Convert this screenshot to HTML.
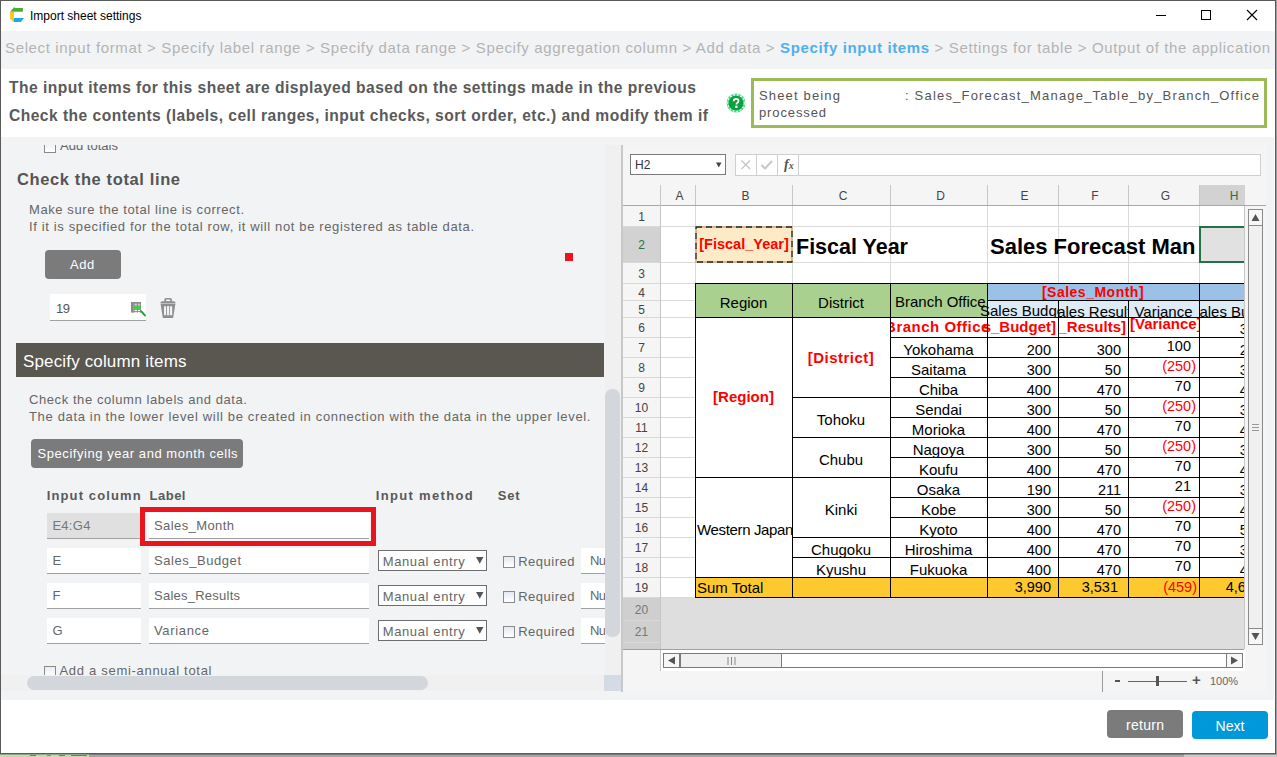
<!DOCTYPE html><html><head><meta charset="utf-8"><style>
html,body{margin:0;padding:0;width:1277px;height:757px;overflow:hidden;background:#fff;}
body{position:relative;font-family:"Liberation Sans", sans-serif;}
div{box-sizing:border-box;}
</style></head><body>
<div style="position:absolute;left:1276px;top:0px;width:1px;height:757px;background:#a0a0a0;"></div>
<div style="position:absolute;left:0px;top:754px;width:1277px;height:3px;background:#a4a4a4;"></div>
<div style="position:absolute;left:1184px;top:754px;width:93px;height:3px;background:#cbcbcb;"></div>
<div style="position:absolute;left:0px;top:754px;width:89px;height:3px;background:#c3dcae;"></div>
<div style="position:absolute;left:30px;top:755px;width:6px;height:1px;background:#777;"></div>
<div style="position:absolute;left:47px;top:755px;width:4px;height:1px;background:#888;"></div>
<div style="position:absolute;left:59px;top:755px;width:6px;height:1px;background:#777;"></div>
<div style="position:absolute;left:71px;top:755px;width:16px;height:1px;background:#777;"></div>
<div style="position:absolute;left:0px;top:754px;width:1277px;height:1px;background:rgba(0,0,0,0.25);"></div>
<div style="position:absolute;left:0px;top:0px;width:1276px;height:754px;border:1px solid #5a5a5a;background:#fff;"></div>
<svg style="position:absolute;left:0px;top:0px" width="28" height="26" viewBox="0 0 28 26">
<polygon points="10.1,11.7 14.4,6.9 14.8,8.1 22.9,8.1 22.9,11.7" fill="#46ad3a"/>
<polygon points="10.1,11.7 14,11.7 14,21.9 13.3,21.9 10.1,18.5" fill="#f8c81c"/>
<polygon points="14,18 24,18 20.8,21.9 14,21.9" fill="#16a9ec"/>
</svg>
<div style="position:absolute;left:30px;top:8px;white-space:nowrap;font-size:12px;color:#000;line-height:16px;">Import sheet settings</div>
<div style="position:absolute;left:1156px;top:15px;width:10px;height:1px;background:#000;"></div>
<div style="position:absolute;left:1201px;top:10px;width:10px;height:10px;border:1px solid #000;"></div>
<svg style="position:absolute;left:1246px;top:9px" width="12" height="12" viewBox="0 0 12 12"><path d="M1 1 L11 11 M11 1 L1 11" stroke="#000" stroke-width="1.1"/></svg>
<div style="position:absolute;left:1px;top:31px;width:1274px;height:38px;background:#f2f3f5;"></div>
<div style="position:absolute;left:5px;top:39px;white-space:nowrap;font-size:15px;color:#b4b4b4;line-height:18px;;letter-spacing:0.643px">Select input format &gt; Specify label range &gt; Specify data range &gt; Specify aggregation column &gt; Add data &gt; <b style="color:#50b0ee">Specify input items</b> &gt; Settings for table &gt; Output of the application</div>
<div style="position:absolute;left:9px;top:79px;white-space:nowrap;font-size:15.6px;font-weight:bold;color:#5a5a5a;line-height:18px;;letter-spacing:0.472px">The input items for this sheet are displayed based on the settings made in the previous</div>
<div style="position:absolute;left:9px;top:107px;white-space:nowrap;font-size:15.6px;font-weight:bold;color:#5a5a5a;line-height:18px;;letter-spacing:0.468px">Check the contents (labels, cell ranges, input checks, sort order, etc.) and modify them if</div>
<svg style="position:absolute;left:726px;top:93px" width="20" height="20" viewBox="0 0 20 20">
<circle cx="10" cy="10" r="9.4" fill="#3fd483"/>
<circle cx="10" cy="10" r="8.3" fill="none" stroke="#e6fbe6" stroke-width="1.3" stroke-dasharray="2 1.6"/>
<circle cx="10" cy="10" r="7.3" fill="#08a23c"/>
<path d="M7.7 8.2 Q7.7 5.8 10.1 5.8 Q12.5 5.8 12.5 8 Q12.5 9.3 11.1 10 Q10.4 10.4 10.4 11.6" fill="none" stroke="#fff" stroke-width="1.8"/>
<rect x="9.2" y="12.7" width="2.3" height="2.2" fill="#fff"/>
</svg>
<div style="position:absolute;left:751px;top:78px;width:516px;height:50px;border:3px solid #9bbb59;background:#fff;"></div>
<div style="position:absolute;left:759px;top:88px;white-space:nowrap;font-size:13px;color:#555;line-height:16.5px;;letter-spacing:1.159px">Sheet being</div>
<div style="position:absolute;left:759px;top:104.5px;white-space:nowrap;font-size:13px;color:#555;line-height:16.5px;;letter-spacing:0.877px">processed</div>
<div style="position:absolute;left:905px;top:88px;white-space:nowrap;font-size:13px;color:#555;line-height:16.5px;;letter-spacing:1.191px">: Sales_Forecast_Manage_Table_by_Branch_Office</div>
<div style="position:absolute;left:1px;top:137px;width:1273px;height:563px;background:#f2f3f5;"></div>
<div style="position:absolute;left:1px;top:145px;width:604px;height:530px;overflow:hidden;">
<div style="position:absolute;left:43px;top:-4px;width:12px;height:12px;border:1px solid #8a8a8a;background:linear-gradient(#e9eef5,#fff);"></div>
<div style="position:absolute;left:59px;top:-6px;white-space:nowrap;font-size:13px;line-height:14px;color:#666;;letter-spacing:0.019px">Add totals</div>
<div style="position:absolute;left:16px;top:25px;white-space:nowrap;font-size:16.5px;font-weight:bold;color:#555;line-height:18px;;letter-spacing:0.617px">Check the total line</div>
<div style="position:absolute;left:28px;top:58px;white-space:nowrap;font-size:13px;line-height:14px;color:#666;;letter-spacing:0.590px">Make sure the total line is correct.</div>
<div style="position:absolute;left:28px;top:75px;white-space:nowrap;font-size:13px;line-height:14px;color:#666;;letter-spacing:0.637px">If it is specified for the total row, it will not be registered as table data.</div>
<div style="position:absolute;left:44px;top:105px;width:76px;height:29px;background:#7b7b7b;border-radius:4px;"></div>
<div style="position:absolute;left:69px;top:113px;white-space:nowrap;font-size:13px;color:#fff;line-height:14px;;letter-spacing:0.580px">Add</div>
<div style="position:absolute;left:564px;top:108px;width:8px;height:8px;background:#e8141e;"></div>
<div style="position:absolute;left:49px;top:149px;width:96px;height:27px;background:#fff;border-bottom:1.5px solid #a0a0a0;"></div>
<div style="position:absolute;left:55px;top:157px;white-space:nowrap;font-size:13px;line-height:14px;color:#555;;letter-spacing:-0.469px">19</div>
<svg style="position:absolute;left:130px;top:157px" width="16" height="16" viewBox="0 0 16 16">
<rect x="0" y="0" width="10" height="10.6" fill="#fff"/>
<rect x="0" y="0" width="10" height="1.8" fill="#8c8c8c"/>
<rect x="0" y="0" width="2.6" height="10.6" fill="#8c8c8c"/>
<path d="M0 3.1H10M0 5.2H10M0 7.3H10M0 9.6H10M3.1 0V10.6M6.4 0V10.6M9.5 0V10.6" stroke="#8c8c8c" stroke-width="1"/>
<rect x="3" y="3.6" width="7" height="4.4" fill="#3cc63c" opacity="0.8"/>
<path d="M10.3 9.4 L13.9 13.4" stroke="#17a534" stroke-width="2" stroke-linecap="round"/></svg>
<svg style="position:absolute;left:159px;top:152px" width="16" height="22" viewBox="0 0 16 22">
<path d="M4.2 4.5 V3 Q4.2 1 6.2 1 H10 Q12 1 12 3 V4.5 Z M6 4 H10.2 V3.2 Q10.2 2.5 9.5 2.5 H6.7 Q6 2.5 6 3.2 Z" fill="#8e8e8e" fill-rule="evenodd"/>
<polygon points="0.2,6 1.6,4.3 14.4,4.3 15.8,6" fill="#8e8e8e"/>
<polygon points="0.5,6.6 15.5,6.6 13.1,20.9 2.8,20.9" fill="#8e8e8e"/>
<g fill="#f2f3f5"><rect x="4" y="9.3" width="2.1" height="8.9"/><rect x="7" y="9.1" width="2.2" height="9.2"/><rect x="10" y="9.3" width="2.2" height="8.9"/></g>
</svg>
<div style="position:absolute;left:15px;top:198px;width:588px;height:34px;background:#5a5650;"></div>
<div style="position:absolute;left:22px;top:207px;white-space:nowrap;font-size:17px;color:#fff;line-height:20px;;letter-spacing:0.151px">Specify column items</div>
<div style="position:absolute;left:28px;top:248px;white-space:nowrap;font-size:13px;line-height:14px;color:#666;;letter-spacing:0.579px">Check the column labels and data.</div>
<div style="position:absolute;left:28px;top:265px;white-space:nowrap;font-size:13px;line-height:14px;color:#666;;letter-spacing:0.658px">The data in the lower level will be created in connection with the data in the upper level.</div>
<div style="position:absolute;left:30px;top:294px;width:212px;height:29px;background:#7b7b7b;border-radius:4px;"></div>
<div style="position:absolute;left:36.6px;top:301px;white-space:nowrap;font-size:13px;color:#fff;line-height:15px;;letter-spacing:0.548px">Specifying year and month cells</div>
<div style="position:absolute;left:45.7px;top:344px;white-space:nowrap;font-size:13px;font-weight:bold;color:#595959;line-height:14px;;letter-spacing:1.126px">Input column</div>
<div style="position:absolute;left:148.5px;top:344px;white-space:nowrap;font-size:13px;font-weight:bold;color:#595959;line-height:14px;;letter-spacing:0.508px">Label</div>
<div style="position:absolute;left:374.7px;top:344px;white-space:nowrap;font-size:13px;font-weight:bold;color:#595959;line-height:14px;;letter-spacing:1.334px">Input method</div>
<div style="position:absolute;left:496.7px;top:344px;white-space:nowrap;font-size:13px;font-weight:bold;color:#595959;line-height:14px;;letter-spacing:0.883px">Set</div>
<div style="position:absolute;left:46px;top:368px;width:94px;height:26px;background:#e0e0e0;border-bottom:1.5px solid #a0a0a0;"></div>
<div style="position:absolute;left:51.4px;top:374px;white-space:nowrap;font-size:13px;line-height:14px;color:#666;color:#777;;letter-spacing:0.285px">E4:G4</div>
<div style="position:absolute;left:139px;top:362px;width:236px;height:39px;border:5px solid #e8141e;background:#f6f6f6;"></div>
<div style="position:absolute;left:148px;top:367px;width:220px;height:27px;background:#fff;border-bottom:1.5px solid #a0a0a0;"></div>
<div style="position:absolute;left:153px;top:374px;white-space:nowrap;font-size:13px;line-height:14px;color:#666;;letter-spacing:0.411px">Sales_Month</div>
<div style="position:absolute;left:46px;top:403px;width:94px;height:26px;background:#fff;border-bottom:1.5px solid #a0a0a0;"></div>
<div style="position:absolute;left:51.4px;top:409px;white-space:nowrap;font-size:13px;line-height:14px;color:#666;">E</div>
<div style="position:absolute;left:148px;top:403px;width:220px;height:26px;background:#fff;border-bottom:1.5px solid #a0a0a0;"></div>
<div style="position:absolute;left:153px;top:409px;white-space:nowrap;font-size:13px;line-height:14px;color:#666;;letter-spacing:0.550px">Sales_Budget</div>
<div style="position:absolute;left:377px;top:405px;width:109px;height:21px;border:1px solid #6e6e6e;background:#fff;"></div>
<div style="position:absolute;left:381.7px;top:410px;white-space:nowrap;font-size:13px;line-height:14px;color:#666;;letter-spacing:0.622px">Manual entry</div>
<svg style="position:absolute;left:475px;top:412px" width="8" height="7" viewBox="0 0 8 7"><path d="M0 0H7.5L3.75 6.8Z" fill="#555"/></svg>
<div style="position:absolute;left:502px;top:411px;width:12px;height:12px;border:1px solid #8a8a8a;background:linear-gradient(#e3e9f2,#fff);"></div>
<div style="position:absolute;left:517.2px;top:410px;white-space:nowrap;font-size:13px;line-height:14px;color:#666;;letter-spacing:0.519px">Required</div>
<div style="position:absolute;left:580px;top:403px;width:40px;height:26px;background:#fff;border-bottom:1.5px solid #a0a0a0;"></div>
<div style="position:absolute;left:589px;top:409px;white-space:nowrap;font-size:13px;line-height:14px;color:#666;;letter-spacing:-0.625px">Nu</div>
<div style="position:absolute;left:46px;top:438px;width:94px;height:26px;background:#fff;border-bottom:1.5px solid #a0a0a0;"></div>
<div style="position:absolute;left:51.4px;top:444px;white-space:nowrap;font-size:13px;line-height:14px;color:#666;">F</div>
<div style="position:absolute;left:148px;top:438px;width:220px;height:26px;background:#fff;border-bottom:1.5px solid #a0a0a0;"></div>
<div style="position:absolute;left:153px;top:444px;white-space:nowrap;font-size:13px;line-height:14px;color:#666;;letter-spacing:0.241px">Sales_Results</div>
<div style="position:absolute;left:377px;top:440px;width:109px;height:21px;border:1px solid #6e6e6e;background:#fff;"></div>
<div style="position:absolute;left:381.7px;top:445px;white-space:nowrap;font-size:13px;line-height:14px;color:#666;;letter-spacing:0.622px">Manual entry</div>
<svg style="position:absolute;left:475px;top:447px" width="8" height="7" viewBox="0 0 8 7"><path d="M0 0H7.5L3.75 6.8Z" fill="#555"/></svg>
<div style="position:absolute;left:502px;top:446px;width:12px;height:12px;border:1px solid #8a8a8a;background:linear-gradient(#e3e9f2,#fff);"></div>
<div style="position:absolute;left:517.2px;top:445px;white-space:nowrap;font-size:13px;line-height:14px;color:#666;;letter-spacing:0.519px">Required</div>
<div style="position:absolute;left:580px;top:438px;width:40px;height:26px;background:#fff;border-bottom:1.5px solid #a0a0a0;"></div>
<div style="position:absolute;left:589px;top:444px;white-space:nowrap;font-size:13px;line-height:14px;color:#666;;letter-spacing:-0.625px">Nu</div>
<div style="position:absolute;left:46px;top:473px;width:94px;height:26px;background:#fff;border-bottom:1.5px solid #a0a0a0;"></div>
<div style="position:absolute;left:51.4px;top:479px;white-space:nowrap;font-size:13px;line-height:14px;color:#666;">G</div>
<div style="position:absolute;left:148px;top:473px;width:220px;height:26px;background:#fff;border-bottom:1.5px solid #a0a0a0;"></div>
<div style="position:absolute;left:153px;top:479px;white-space:nowrap;font-size:13px;line-height:14px;color:#666;;letter-spacing:0.665px">Variance</div>
<div style="position:absolute;left:377px;top:475px;width:109px;height:21px;border:1px solid #6e6e6e;background:#fff;"></div>
<div style="position:absolute;left:381.7px;top:480px;white-space:nowrap;font-size:13px;line-height:14px;color:#666;;letter-spacing:0.622px">Manual entry</div>
<svg style="position:absolute;left:475px;top:482px" width="8" height="7" viewBox="0 0 8 7"><path d="M0 0H7.5L3.75 6.8Z" fill="#555"/></svg>
<div style="position:absolute;left:502px;top:481px;width:12px;height:12px;border:1px solid #8a8a8a;background:linear-gradient(#e3e9f2,#fff);"></div>
<div style="position:absolute;left:517.2px;top:480px;white-space:nowrap;font-size:13px;line-height:14px;color:#666;;letter-spacing:0.519px">Required</div>
<div style="position:absolute;left:580px;top:473px;width:40px;height:26px;background:#fff;border-bottom:1.5px solid #a0a0a0;"></div>
<div style="position:absolute;left:589px;top:479px;white-space:nowrap;font-size:13px;line-height:14px;color:#666;;letter-spacing:-0.625px">Nu</div>
<div style="position:absolute;left:43px;top:521px;width:12px;height:12px;border:1px solid #8a8a8a;background:linear-gradient(#e9eef5,#fff);"></div>
<div style="position:absolute;left:58.5px;top:519px;white-space:nowrap;font-size:13px;line-height:14px;color:#666;;letter-spacing:0.700px">Add a semi-annual total</div>
</div>
<div style="position:absolute;left:605px;top:145px;width:16px;height:530px;background:#f0f0f0;"></div>
<div style="position:absolute;left:605px;top:389px;width:15px;height:248px;background:#d3d6db;border-radius:7px;"></div>
<div style="position:absolute;left:1px;top:675px;width:604px;height:16px;background:#f0f0f0;"></div>
<div style="position:absolute;left:27px;top:676px;width:401px;height:14px;background:#d3d6db;border-radius:7px;"></div>
<div style="position:absolute;left:604px;top:675px;width:17px;height:16px;background:#d5dbe5;"></div>
<div style="position:absolute;left:621px;top:145px;width:2px;height:547px;background:#c8c8c8;"></div>
<div style="position:absolute;left:623px;top:145px;width:643px;height:547px;background:#f5f5f5;"></div>
<div style="position:absolute;left:630px;top:154px;width:96px;height:21px;border:1px solid #7a7a7a;background:#fff;"></div>
<div style="position:absolute;left:635px;top:158px;white-space:nowrap;font-size:12px;color:#333;line-height:14px;">H2</div>
<svg style="position:absolute;left:716px;top:162px" width="6" height="6" viewBox="0 0 6 6"><path d="M0 0.5H5.5L2.75 5.5Z" fill="#444"/></svg>
<div style="position:absolute;left:735px;top:154px;width:64px;height:22px;border:1px solid #cfcfcf;background:#fff;"></div>
<div style="position:absolute;left:756px;top:155px;width:1px;height:20px;background:#cfcfcf;"></div>
<div style="position:absolute;left:777px;top:155px;width:1px;height:20px;background:#cfcfcf;"></div>
<div style="position:absolute;left:798px;top:154px;width:463px;height:22px;border:1px solid #cfcfcf;background:#fff;"></div>
<svg style="position:absolute;left:740px;top:159px" width="12" height="12" viewBox="0 0 12 12"><path d="M1.5 1.5L10 10M10 1.5L1.5 10" stroke="#c4c4c4" stroke-width="1.2"/></svg>
<svg style="position:absolute;left:760px;top:159px" width="14" height="12" viewBox="0 0 14 12"><path d="M1.5 6L5 9.5L12 2" stroke="#c8c8c8" stroke-width="2.1" fill="none"/></svg>
<div style="position:absolute;left:784px;top:158px;white-space:nowrap;font-family:'Liberation Serif',serif;font-size:14px;font-weight:bold;color:#555;line-height:14px;"><i>f</i><i style="font-size:10px;">x</i></div>
<div style="position:absolute;left:662px;top:189px;white-space:nowrap;width:35px;text-align:center;font-size:12px;color:#444;line-height:14px;">A</div>
<div style="position:absolute;left:660px;top:185px;width:1px;height:20px;background:#c6c6c6;"></div>
<div style="position:absolute;left:697px;top:189px;white-space:nowrap;width:97px;text-align:center;font-size:12px;color:#444;line-height:14px;">B</div>
<div style="position:absolute;left:695px;top:185px;width:1px;height:20px;background:#c6c6c6;"></div>
<div style="position:absolute;left:794px;top:189px;white-space:nowrap;width:98px;text-align:center;font-size:12px;color:#444;line-height:14px;">C</div>
<div style="position:absolute;left:792px;top:185px;width:1px;height:20px;background:#c6c6c6;"></div>
<div style="position:absolute;left:892px;top:189px;white-space:nowrap;width:97px;text-align:center;font-size:12px;color:#444;line-height:14px;">D</div>
<div style="position:absolute;left:890px;top:185px;width:1px;height:20px;background:#c6c6c6;"></div>
<div style="position:absolute;left:989px;top:189px;white-space:nowrap;width:71px;text-align:center;font-size:12px;color:#444;line-height:14px;">E</div>
<div style="position:absolute;left:987px;top:185px;width:1px;height:20px;background:#c6c6c6;"></div>
<div style="position:absolute;left:1060px;top:189px;white-space:nowrap;width:70px;text-align:center;font-size:12px;color:#444;line-height:14px;">F</div>
<div style="position:absolute;left:1058px;top:185px;width:1px;height:20px;background:#c6c6c6;"></div>
<div style="position:absolute;left:1130px;top:189px;white-space:nowrap;width:71px;text-align:center;font-size:12px;color:#444;line-height:14px;">G</div>
<div style="position:absolute;left:1128px;top:185px;width:1px;height:20px;background:#c6c6c6;"></div>
<div style="position:absolute;left:1200px;top:185px;width:45px;height:20px;background:#d2d2d2;"></div>
<div style="position:absolute;left:1199px;top:189px;white-space:nowrap;width:70px;text-align:center;font-size:12px;color:#217346;line-height:14px;">H</div>
<div style="position:absolute;left:1199px;top:185px;width:1px;height:20px;background:#c6c6c6;"></div>
<div style="position:absolute;left:623px;top:205px;width:643px;height:1px;background:#a8a8a8;"></div>
<div style="position:absolute;left:623px;top:207px;width:37px;height:20px;background:#f5f5f5;"></div>
<div style="position:absolute;left:623px;top:226px;width:37px;height:1px;background:#d9d9d9;"></div>
<div style="position:absolute;left:623px;top:210.0px;white-space:nowrap;width:37px;text-align:center;font-size:12px;color:#444;line-height:14px;">1</div>
<div style="position:absolute;left:623px;top:227px;width:37px;height:36px;background:#d2d2d2;"></div>
<div style="position:absolute;left:623px;top:262px;width:37px;height:1px;background:#d9d9d9;"></div>
<div style="position:absolute;left:623px;top:238.0px;white-space:nowrap;width:37px;text-align:center;font-size:12px;color:#217346;line-height:14px;">2</div>
<div style="position:absolute;left:623px;top:263px;width:37px;height:21px;background:#f5f5f5;"></div>
<div style="position:absolute;left:623px;top:283px;width:37px;height:1px;background:#d9d9d9;"></div>
<div style="position:absolute;left:623px;top:266.5px;white-space:nowrap;width:37px;text-align:center;font-size:12px;color:#444;line-height:14px;">3</div>
<div style="position:absolute;left:623px;top:284px;width:37px;height:17px;background:#f5f5f5;"></div>
<div style="position:absolute;left:623px;top:300px;width:37px;height:1px;background:#d9d9d9;"></div>
<div style="position:absolute;left:623px;top:285.5px;white-space:nowrap;width:37px;text-align:center;font-size:12px;color:#444;line-height:14px;">4</div>
<div style="position:absolute;left:623px;top:301px;width:37px;height:17px;background:#f5f5f5;"></div>
<div style="position:absolute;left:623px;top:317px;width:37px;height:1px;background:#d9d9d9;"></div>
<div style="position:absolute;left:623px;top:302.5px;white-space:nowrap;width:37px;text-align:center;font-size:12px;color:#444;line-height:14px;">5</div>
<div style="position:absolute;left:623px;top:318px;width:37px;height:20px;background:#f5f5f5;"></div>
<div style="position:absolute;left:623px;top:337px;width:37px;height:1px;background:#d9d9d9;"></div>
<div style="position:absolute;left:623px;top:321.0px;white-space:nowrap;width:37px;text-align:center;font-size:12px;color:#444;line-height:14px;">6</div>
<div style="position:absolute;left:623px;top:338px;width:37px;height:20px;background:#f5f5f5;"></div>
<div style="position:absolute;left:623px;top:357px;width:37px;height:1px;background:#d9d9d9;"></div>
<div style="position:absolute;left:623px;top:341.0px;white-space:nowrap;width:37px;text-align:center;font-size:12px;color:#444;line-height:14px;">7</div>
<div style="position:absolute;left:623px;top:358px;width:37px;height:20px;background:#f5f5f5;"></div>
<div style="position:absolute;left:623px;top:377px;width:37px;height:1px;background:#d9d9d9;"></div>
<div style="position:absolute;left:623px;top:361.0px;white-space:nowrap;width:37px;text-align:center;font-size:12px;color:#444;line-height:14px;">8</div>
<div style="position:absolute;left:623px;top:378px;width:37px;height:20px;background:#f5f5f5;"></div>
<div style="position:absolute;left:623px;top:397px;width:37px;height:1px;background:#d9d9d9;"></div>
<div style="position:absolute;left:623px;top:381.0px;white-space:nowrap;width:37px;text-align:center;font-size:12px;color:#444;line-height:14px;">9</div>
<div style="position:absolute;left:623px;top:398px;width:37px;height:20px;background:#f5f5f5;"></div>
<div style="position:absolute;left:623px;top:417px;width:37px;height:1px;background:#d9d9d9;"></div>
<div style="position:absolute;left:623px;top:401.0px;white-space:nowrap;width:37px;text-align:center;font-size:12px;color:#444;line-height:14px;">10</div>
<div style="position:absolute;left:623px;top:418px;width:37px;height:20px;background:#f5f5f5;"></div>
<div style="position:absolute;left:623px;top:437px;width:37px;height:1px;background:#d9d9d9;"></div>
<div style="position:absolute;left:623px;top:421.0px;white-space:nowrap;width:37px;text-align:center;font-size:12px;color:#444;line-height:14px;">11</div>
<div style="position:absolute;left:623px;top:438px;width:37px;height:20px;background:#f5f5f5;"></div>
<div style="position:absolute;left:623px;top:457px;width:37px;height:1px;background:#d9d9d9;"></div>
<div style="position:absolute;left:623px;top:441.0px;white-space:nowrap;width:37px;text-align:center;font-size:12px;color:#444;line-height:14px;">12</div>
<div style="position:absolute;left:623px;top:458px;width:37px;height:20px;background:#f5f5f5;"></div>
<div style="position:absolute;left:623px;top:477px;width:37px;height:1px;background:#d9d9d9;"></div>
<div style="position:absolute;left:623px;top:461.0px;white-space:nowrap;width:37px;text-align:center;font-size:12px;color:#444;line-height:14px;">13</div>
<div style="position:absolute;left:623px;top:478px;width:37px;height:20px;background:#f5f5f5;"></div>
<div style="position:absolute;left:623px;top:497px;width:37px;height:1px;background:#d9d9d9;"></div>
<div style="position:absolute;left:623px;top:481.0px;white-space:nowrap;width:37px;text-align:center;font-size:12px;color:#444;line-height:14px;">14</div>
<div style="position:absolute;left:623px;top:498px;width:37px;height:20px;background:#f5f5f5;"></div>
<div style="position:absolute;left:623px;top:517px;width:37px;height:1px;background:#d9d9d9;"></div>
<div style="position:absolute;left:623px;top:501.0px;white-space:nowrap;width:37px;text-align:center;font-size:12px;color:#444;line-height:14px;">15</div>
<div style="position:absolute;left:623px;top:518px;width:37px;height:20px;background:#f5f5f5;"></div>
<div style="position:absolute;left:623px;top:537px;width:37px;height:1px;background:#d9d9d9;"></div>
<div style="position:absolute;left:623px;top:521.0px;white-space:nowrap;width:37px;text-align:center;font-size:12px;color:#444;line-height:14px;">16</div>
<div style="position:absolute;left:623px;top:538px;width:37px;height:20px;background:#f5f5f5;"></div>
<div style="position:absolute;left:623px;top:557px;width:37px;height:1px;background:#d9d9d9;"></div>
<div style="position:absolute;left:623px;top:541.0px;white-space:nowrap;width:37px;text-align:center;font-size:12px;color:#444;line-height:14px;">17</div>
<div style="position:absolute;left:623px;top:558px;width:37px;height:20px;background:#f5f5f5;"></div>
<div style="position:absolute;left:623px;top:577px;width:37px;height:1px;background:#d9d9d9;"></div>
<div style="position:absolute;left:623px;top:561.0px;white-space:nowrap;width:37px;text-align:center;font-size:12px;color:#444;line-height:14px;">18</div>
<div style="position:absolute;left:623px;top:578px;width:37px;height:20px;background:#f5f5f5;"></div>
<div style="position:absolute;left:623px;top:597px;width:37px;height:1px;background:#d9d9d9;"></div>
<div style="position:absolute;left:623px;top:581.0px;white-space:nowrap;width:37px;text-align:center;font-size:12px;color:#444;line-height:14px;">19</div>
<div style="position:absolute;left:623px;top:598px;width:37px;height:23px;background:#cfcfcf;"></div>
<div style="position:absolute;left:623px;top:620px;width:37px;height:1px;background:#d9d9d9;"></div>
<div style="position:absolute;left:623px;top:602.5px;white-space:nowrap;width:37px;text-align:center;font-size:12px;color:#777;line-height:14px;">20</div>
<div style="position:absolute;left:623px;top:621px;width:37px;height:22px;background:#cfcfcf;"></div>
<div style="position:absolute;left:623px;top:642px;width:37px;height:1px;background:#d9d9d9;"></div>
<div style="position:absolute;left:623px;top:625.0px;white-space:nowrap;width:37px;text-align:center;font-size:12px;color:#777;line-height:14px;">21</div>
<div style="position:absolute;left:623px;top:643px;width:37px;height:7px;background:#cfcfcf;"></div>
<div style="position:absolute;left:623px;top:649px;width:37px;height:1px;background:#d9d9d9;"></div>
<div style="position:absolute;left:660px;top:185px;width:1px;height:486px;background:#c6c6c6;"></div>
<div style="position:absolute;left:661px;top:206px;width:583px;height:443px;overflow:hidden;background:#fff;">
<div style="position:absolute;left:34px;top:0px;width:1px;height:443px;background:#dadada;"></div>
<div style="position:absolute;left:131px;top:0px;width:1px;height:443px;background:#dadada;"></div>
<div style="position:absolute;left:229px;top:0px;width:1px;height:443px;background:#dadada;"></div>
<div style="position:absolute;left:326px;top:0px;width:1px;height:443px;background:#dadada;"></div>
<div style="position:absolute;left:397px;top:0px;width:1px;height:443px;background:#dadada;"></div>
<div style="position:absolute;left:467px;top:0px;width:1px;height:443px;background:#dadada;"></div>
<div style="position:absolute;left:538px;top:0px;width:1px;height:443px;background:#dadada;"></div>
<div style="position:absolute;left:608px;top:0px;width:1px;height:443px;background:#dadada;"></div>
<div style="position:absolute;left:0px;top:20px;width:600px;height:1px;background:#dadada;"></div>
<div style="position:absolute;left:0px;top:56px;width:600px;height:1px;background:#dadada;"></div>
<div style="position:absolute;left:0px;top:77px;width:600px;height:1px;background:#dadada;"></div>
<div style="position:absolute;left:0px;top:94px;width:600px;height:1px;background:#dadada;"></div>
<div style="position:absolute;left:0px;top:111px;width:600px;height:1px;background:#dadada;"></div>
<div style="position:absolute;left:0px;top:131px;width:600px;height:1px;background:#dadada;"></div>
<div style="position:absolute;left:0px;top:151px;width:600px;height:1px;background:#dadada;"></div>
<div style="position:absolute;left:0px;top:171px;width:600px;height:1px;background:#dadada;"></div>
<div style="position:absolute;left:0px;top:191px;width:600px;height:1px;background:#dadada;"></div>
<div style="position:absolute;left:0px;top:211px;width:600px;height:1px;background:#dadada;"></div>
<div style="position:absolute;left:0px;top:231px;width:600px;height:1px;background:#dadada;"></div>
<div style="position:absolute;left:0px;top:251px;width:600px;height:1px;background:#dadada;"></div>
<div style="position:absolute;left:0px;top:271px;width:600px;height:1px;background:#dadada;"></div>
<div style="position:absolute;left:0px;top:291px;width:600px;height:1px;background:#dadada;"></div>
<div style="position:absolute;left:0px;top:311px;width:600px;height:1px;background:#dadada;"></div>
<div style="position:absolute;left:0px;top:331px;width:600px;height:1px;background:#dadada;"></div>
<div style="position:absolute;left:0px;top:351px;width:600px;height:1px;background:#dadada;"></div>
<div style="position:absolute;left:0px;top:371px;width:600px;height:1px;background:#dadada;"></div>
<div style="position:absolute;left:0px;top:391px;width:600px;height:1px;background:#dadada;"></div>
<div style="position:absolute;left:0px;top:414px;width:600px;height:1px;background:#dadada;"></div>
<div style="position:absolute;left:0px;top:436px;width:600px;height:1px;background:#dadada;"></div>
<div style="position:absolute;left:0px;top:443px;width:600px;height:1px;background:#dadada;"></div>
<div style="position:absolute;left:0px;top:392px;width:600px;height:51px;background:#dedede;"></div>
<div style="position:absolute;left:34px;top:20px;width:98px;height:37px;background:#fdebc8;"></div>
<svg style="position:absolute;left:34px;top:20px" width="98" height="37" viewBox="0 0 98 37">
<rect x="1" y="1" width="96" height="35" fill="none" stroke="#d9b592" stroke-width="2.2" stroke-dasharray="4 6" stroke-dashoffset="-6" stroke-linecap="round"/>
<rect x="1" y="1" width="96" height="35" fill="none" stroke="#1a1a1a" stroke-width="1.3" stroke-dasharray="6 4"/></svg>
<div style="position:absolute;left:34px;top:20px;width:98px;height:37px;overflow:hidden;"><div style="position:absolute;left:calc(50% + 0px);transform:translateX(-50%);top:10.53px;white-space:nowrap;font-size:14.5px;line-height:14.5px;color:#f00;font-weight:bold;">[Fiscal_Year]</div></div>
<div style="position:absolute;left:135px;top:30px;white-space:nowrap;font-size:21.5px;font-weight:bold;color:#000;line-height:22px;">Fiscal Year</div>
<div style="position:absolute;left:329px;top:30px;white-space:nowrap;font-size:22px;font-weight:bold;color:#000;line-height:22px;">Sales Forecast Man</div>
<div style="position:absolute;left:538px;top:20px;width:52px;height:37px;background:#e1e1e1;border:2px solid #217346;"></div>
<div style="position:absolute;left:34px;top:77px;width:293px;height:35px;background:#a9d08e;"></div>
<div style="position:absolute;left:326px;top:77px;width:260px;height:17px;background:#9bc2e6;"></div>
<div style="position:absolute;left:326px;top:94px;width:260px;height:17px;background:#ddebf7;"></div>
<div style="position:absolute;left:34px;top:111px;width:560px;height:260px;background:#fff;"></div>
<div style="position:absolute;left:34px;top:371px;width:560px;height:21px;background:#fdc92e;"></div>
<div style="position:absolute;left:34px;top:77px;width:97px;height:34px;overflow:hidden;"><div style="position:absolute;left:calc(50% + 0px);transform:translateX(-50%);top:12.20px;white-space:nowrap;font-size:15px;line-height:15px;color:#000;">Region</div></div>
<div style="position:absolute;left:131px;top:77px;width:98px;height:34px;overflow:hidden;"><div style="position:absolute;left:calc(50% + 0px);transform:translateX(-50%);top:12.20px;white-space:nowrap;font-size:15px;line-height:15px;color:#000;">District</div></div>
<div style="position:absolute;left:229px;top:77px;width:97px;height:34px;overflow:hidden;"><div style="position:absolute;left:5px;top:11.30px;white-space:nowrap;font-size:15px;line-height:15px;color:#000;">Branch Office</div></div>
<div style="position:absolute;left:326px;top:77px;width:212px;height:17px;overflow:hidden;"><div style="position:absolute;left:calc(50% + 0px);transform:translateX(-50%);top:1.95px;white-space:nowrap;font-size:14px;line-height:14px;color:#f00;font-weight:bold;letter-spacing:0.5px;">[Sales_Month]</div></div>
<div style="position:absolute;left:314px;top:94px;width:83px;height:17px;overflow:hidden;"><div style="position:absolute;left:5px;top:3.4px;white-space:nowrap;font-size:15px;line-height:15px;color:#000">Sales Budget</div></div>
<div style="position:absolute;left:397px;top:94px;width:70px;height:17px;overflow:hidden;"><div style="position:absolute;left:calc(50% + 0px);transform:translateX(-50%);top:3.60px;white-space:nowrap;font-size:15px;line-height:15px;color:#000;">Sales Results</div></div>
<div style="position:absolute;left:467px;top:94px;width:71px;height:17px;overflow:hidden;"><div style="position:absolute;left:calc(50% + 0px);transform:translateX(-50%);top:3.60px;white-space:nowrap;font-size:15px;line-height:15px;color:#000;">Variance</div></div>
<div style="position:absolute;left:538px;top:94px;width:70px;height:17px;overflow:hidden;"><div style="position:absolute;left:calc(50% + 0px);transform:translateX(-50%);top:3.60px;white-space:nowrap;font-size:15px;line-height:15px;color:#000;">Sales Budget</div></div>
<div style="position:absolute;left:229px;top:111px;width:97px;height:20px;overflow:hidden;"><div style="position:absolute;left:calc(50% + -1px);transform:translateX(-50%);top:2.20px;white-space:nowrap;font-size:15px;line-height:15px;color:#f00;font-weight:bold;letter-spacing:0.5px;">[Branch Office]</div></div>
<div style="position:absolute;left:323px;top:111px;width:74px;height:20px;overflow:hidden;"><div style="position:absolute;right:2px;top:2.2px;white-space:nowrap;font-size:15px;line-height:15px;color:#f00;font-weight:bold;">[Sales_Budget]</div></div>
<div style="position:absolute;left:397px;top:111px;width:70px;height:20px;overflow:hidden;"><div style="position:absolute;right:2px;top:1.50px;white-space:nowrap;font-size:15px;line-height:15px;color:#f00;font-weight:bold;">[Sales_Results]</div></div>
<div style="position:absolute;left:467px;top:111px;width:71px;height:20px;overflow:hidden;"><div style="position:absolute;left:2px;top:-0.80px;white-space:nowrap;font-size:15px;line-height:15px;color:#f00;font-weight:bold;">[Variance]</div></div>
<div style="position:absolute;left:538px;top:111px;width:70px;height:20px;overflow:hidden;"><div style="position:absolute;right:5px;top:4.93px;white-space:nowrap;font-size:14.5px;line-height:14.5px;color:#000;">300</div></div>
<div style="position:absolute;left:34px;top:111px;width:97px;height:160px;overflow:hidden;"><div style="position:absolute;left:calc(50% + 0px);transform:translateX(-50%);top:72.30px;white-space:nowrap;font-size:15px;line-height:15px;color:#f00;font-weight:bold;">[Region]</div></div>
<div style="position:absolute;left:131px;top:111px;width:98px;height:80px;overflow:hidden;"><div style="position:absolute;left:calc(50% + 0px);transform:translateX(-50%);top:32.70px;white-space:nowrap;font-size:15px;line-height:15px;color:#f00;font-weight:bold;letter-spacing:0.5px;">[District]</div></div>
<div style="position:absolute;left:131px;top:191px;width:98px;height:40px;overflow:hidden;"><div style="position:absolute;left:calc(50% + 0px);transform:translateX(-50%);top:15.00px;white-space:nowrap;font-size:15px;line-height:15px;color:#000;">Tohoku</div></div>
<div style="position:absolute;left:131px;top:231px;width:98px;height:40px;overflow:hidden;"><div style="position:absolute;left:calc(50% + 0px);transform:translateX(-50%);top:15.20px;white-space:nowrap;font-size:15px;line-height:15px;color:#000;">Chubu</div></div>
<div style="position:absolute;left:131px;top:271px;width:98px;height:60px;overflow:hidden;"><div style="position:absolute;left:calc(50% + 0px);transform:translateX(-50%);top:25.30px;white-space:nowrap;font-size:15px;line-height:15px;color:#000;">Kinki</div></div>
<div style="position:absolute;left:131px;top:331px;width:98px;height:20px;overflow:hidden;"><div style="position:absolute;left:calc(50% + 0px);transform:translateX(-50%);top:4.90px;white-space:nowrap;font-size:15px;line-height:15px;color:#000;">Chugoku</div></div>
<div style="position:absolute;left:131px;top:351px;width:98px;height:20px;overflow:hidden;"><div style="position:absolute;left:calc(50% + 0px);transform:translateX(-50%);top:4.70px;white-space:nowrap;font-size:15px;line-height:15px;color:#000;">Kyushu</div></div>
<div style="position:absolute;left:34px;top:271px;width:97px;height:100px;overflow:hidden;"><div style="position:absolute;left:2px;top:45.20px;white-space:nowrap;font-size:15px;line-height:15px;color:#000;letter-spacing:-0.35px;">Western Japan</div></div>
<div style="position:absolute;left:34px;top:371px;width:195px;height:20px;overflow:hidden;"><div style="position:absolute;left:2px;top:2.60px;white-space:nowrap;font-size:15px;line-height:15px;color:#000;">Sum Total</div></div>
<div style="position:absolute;left:229px;top:131px;width:97px;height:20px;overflow:hidden;"><div style="position:absolute;left:calc(50% + 0px);transform:translateX(-50%);top:4.60px;white-space:nowrap;font-size:15px;line-height:15px;color:#000;">Yokohama</div></div>
<div style="position:absolute;left:326px;top:131px;width:71px;height:20px;overflow:hidden;"><div style="position:absolute;right:7px;top:5.53px;white-space:nowrap;font-size:14.5px;line-height:14.5px;color:#000;">200</div></div>
<div style="position:absolute;left:397px;top:131px;width:70px;height:20px;overflow:hidden;"><div style="position:absolute;right:7px;top:5.53px;white-space:nowrap;font-size:14.5px;line-height:14.5px;color:#000;">300</div></div>
<div style="position:absolute;left:467px;top:131px;width:71px;height:20px;overflow:hidden;"><div style="position:absolute;right:8px;top:2.23px;white-space:nowrap;font-size:14.5px;line-height:14.5px;color:#000;">100</div></div>
<div style="position:absolute;left:538px;top:131px;width:70px;height:20px;overflow:hidden;"><div style="position:absolute;right:5px;top:5.53px;white-space:nowrap;font-size:14.5px;line-height:14.5px;color:#000;">200</div></div>
<div style="position:absolute;left:229px;top:151px;width:97px;height:20px;overflow:hidden;"><div style="position:absolute;left:calc(50% + 0px);transform:translateX(-50%);top:4.60px;white-space:nowrap;font-size:15px;line-height:15px;color:#000;">Saitama</div></div>
<div style="position:absolute;left:326px;top:151px;width:71px;height:20px;overflow:hidden;"><div style="position:absolute;right:7px;top:5.53px;white-space:nowrap;font-size:14.5px;line-height:14.5px;color:#000;">300</div></div>
<div style="position:absolute;left:397px;top:151px;width:70px;height:20px;overflow:hidden;"><div style="position:absolute;right:7px;top:5.53px;white-space:nowrap;font-size:14.5px;line-height:14.5px;color:#000;">50</div></div>
<div style="position:absolute;left:467px;top:151px;width:71px;height:20px;overflow:hidden;"><div style="position:absolute;right:3px;top:2.23px;white-space:nowrap;font-size:14.5px;line-height:14.5px;color:#f00;">(250)</div></div>
<div style="position:absolute;left:538px;top:151px;width:70px;height:20px;overflow:hidden;"><div style="position:absolute;right:5px;top:5.53px;white-space:nowrap;font-size:14.5px;line-height:14.5px;color:#000;">300</div></div>
<div style="position:absolute;left:229px;top:171px;width:97px;height:20px;overflow:hidden;"><div style="position:absolute;left:calc(50% + 0px);transform:translateX(-50%);top:4.60px;white-space:nowrap;font-size:15px;line-height:15px;color:#000;">Chiba</div></div>
<div style="position:absolute;left:326px;top:171px;width:71px;height:20px;overflow:hidden;"><div style="position:absolute;right:7px;top:5.53px;white-space:nowrap;font-size:14.5px;line-height:14.5px;color:#000;">400</div></div>
<div style="position:absolute;left:397px;top:171px;width:70px;height:20px;overflow:hidden;"><div style="position:absolute;right:7px;top:5.53px;white-space:nowrap;font-size:14.5px;line-height:14.5px;color:#000;">470</div></div>
<div style="position:absolute;left:467px;top:171px;width:71px;height:20px;overflow:hidden;"><div style="position:absolute;right:8px;top:2.23px;white-space:nowrap;font-size:14.5px;line-height:14.5px;color:#000;">70</div></div>
<div style="position:absolute;left:538px;top:171px;width:70px;height:20px;overflow:hidden;"><div style="position:absolute;right:5px;top:5.53px;white-space:nowrap;font-size:14.5px;line-height:14.5px;color:#000;">400</div></div>
<div style="position:absolute;left:229px;top:191px;width:97px;height:20px;overflow:hidden;"><div style="position:absolute;left:calc(50% + 0px);transform:translateX(-50%);top:4.60px;white-space:nowrap;font-size:15px;line-height:15px;color:#000;">Sendai</div></div>
<div style="position:absolute;left:326px;top:191px;width:71px;height:20px;overflow:hidden;"><div style="position:absolute;right:7px;top:5.53px;white-space:nowrap;font-size:14.5px;line-height:14.5px;color:#000;">300</div></div>
<div style="position:absolute;left:397px;top:191px;width:70px;height:20px;overflow:hidden;"><div style="position:absolute;right:7px;top:5.53px;white-space:nowrap;font-size:14.5px;line-height:14.5px;color:#000;">50</div></div>
<div style="position:absolute;left:467px;top:191px;width:71px;height:20px;overflow:hidden;"><div style="position:absolute;right:3px;top:2.23px;white-space:nowrap;font-size:14.5px;line-height:14.5px;color:#f00;">(250)</div></div>
<div style="position:absolute;left:538px;top:191px;width:70px;height:20px;overflow:hidden;"><div style="position:absolute;right:5px;top:5.53px;white-space:nowrap;font-size:14.5px;line-height:14.5px;color:#000;">300</div></div>
<div style="position:absolute;left:229px;top:211px;width:97px;height:20px;overflow:hidden;"><div style="position:absolute;left:calc(50% + 0px);transform:translateX(-50%);top:4.60px;white-space:nowrap;font-size:15px;line-height:15px;color:#000;">Morioka</div></div>
<div style="position:absolute;left:326px;top:211px;width:71px;height:20px;overflow:hidden;"><div style="position:absolute;right:7px;top:5.53px;white-space:nowrap;font-size:14.5px;line-height:14.5px;color:#000;">400</div></div>
<div style="position:absolute;left:397px;top:211px;width:70px;height:20px;overflow:hidden;"><div style="position:absolute;right:7px;top:5.53px;white-space:nowrap;font-size:14.5px;line-height:14.5px;color:#000;">470</div></div>
<div style="position:absolute;left:467px;top:211px;width:71px;height:20px;overflow:hidden;"><div style="position:absolute;right:8px;top:2.23px;white-space:nowrap;font-size:14.5px;line-height:14.5px;color:#000;">70</div></div>
<div style="position:absolute;left:538px;top:211px;width:70px;height:20px;overflow:hidden;"><div style="position:absolute;right:5px;top:5.53px;white-space:nowrap;font-size:14.5px;line-height:14.5px;color:#000;">400</div></div>
<div style="position:absolute;left:229px;top:231px;width:97px;height:20px;overflow:hidden;"><div style="position:absolute;left:calc(50% + 0px);transform:translateX(-50%);top:4.60px;white-space:nowrap;font-size:15px;line-height:15px;color:#000;">Nagoya</div></div>
<div style="position:absolute;left:326px;top:231px;width:71px;height:20px;overflow:hidden;"><div style="position:absolute;right:7px;top:5.53px;white-space:nowrap;font-size:14.5px;line-height:14.5px;color:#000;">300</div></div>
<div style="position:absolute;left:397px;top:231px;width:70px;height:20px;overflow:hidden;"><div style="position:absolute;right:7px;top:5.53px;white-space:nowrap;font-size:14.5px;line-height:14.5px;color:#000;">50</div></div>
<div style="position:absolute;left:467px;top:231px;width:71px;height:20px;overflow:hidden;"><div style="position:absolute;right:3px;top:2.23px;white-space:nowrap;font-size:14.5px;line-height:14.5px;color:#f00;">(250)</div></div>
<div style="position:absolute;left:538px;top:231px;width:70px;height:20px;overflow:hidden;"><div style="position:absolute;right:5px;top:5.53px;white-space:nowrap;font-size:14.5px;line-height:14.5px;color:#000;">300</div></div>
<div style="position:absolute;left:229px;top:251px;width:97px;height:20px;overflow:hidden;"><div style="position:absolute;left:calc(50% + 0px);transform:translateX(-50%);top:4.60px;white-space:nowrap;font-size:15px;line-height:15px;color:#000;">Koufu</div></div>
<div style="position:absolute;left:326px;top:251px;width:71px;height:20px;overflow:hidden;"><div style="position:absolute;right:7px;top:5.53px;white-space:nowrap;font-size:14.5px;line-height:14.5px;color:#000;">400</div></div>
<div style="position:absolute;left:397px;top:251px;width:70px;height:20px;overflow:hidden;"><div style="position:absolute;right:7px;top:5.53px;white-space:nowrap;font-size:14.5px;line-height:14.5px;color:#000;">470</div></div>
<div style="position:absolute;left:467px;top:251px;width:71px;height:20px;overflow:hidden;"><div style="position:absolute;right:8px;top:2.23px;white-space:nowrap;font-size:14.5px;line-height:14.5px;color:#000;">70</div></div>
<div style="position:absolute;left:538px;top:251px;width:70px;height:20px;overflow:hidden;"><div style="position:absolute;right:5px;top:5.53px;white-space:nowrap;font-size:14.5px;line-height:14.5px;color:#000;">400</div></div>
<div style="position:absolute;left:229px;top:271px;width:97px;height:20px;overflow:hidden;"><div style="position:absolute;left:calc(50% + 0px);transform:translateX(-50%);top:4.60px;white-space:nowrap;font-size:15px;line-height:15px;color:#000;">Osaka</div></div>
<div style="position:absolute;left:326px;top:271px;width:71px;height:20px;overflow:hidden;"><div style="position:absolute;right:7px;top:5.53px;white-space:nowrap;font-size:14.5px;line-height:14.5px;color:#000;">190</div></div>
<div style="position:absolute;left:397px;top:271px;width:70px;height:20px;overflow:hidden;"><div style="position:absolute;right:7px;top:5.53px;white-space:nowrap;font-size:14.5px;line-height:14.5px;color:#000;">211</div></div>
<div style="position:absolute;left:467px;top:271px;width:71px;height:20px;overflow:hidden;"><div style="position:absolute;right:8px;top:2.23px;white-space:nowrap;font-size:14.5px;line-height:14.5px;color:#000;">21</div></div>
<div style="position:absolute;left:538px;top:271px;width:70px;height:20px;overflow:hidden;"><div style="position:absolute;right:5px;top:5.53px;white-space:nowrap;font-size:14.5px;line-height:14.5px;color:#000;">300</div></div>
<div style="position:absolute;left:229px;top:291px;width:97px;height:20px;overflow:hidden;"><div style="position:absolute;left:calc(50% + 0px);transform:translateX(-50%);top:4.60px;white-space:nowrap;font-size:15px;line-height:15px;color:#000;">Kobe</div></div>
<div style="position:absolute;left:326px;top:291px;width:71px;height:20px;overflow:hidden;"><div style="position:absolute;right:7px;top:5.53px;white-space:nowrap;font-size:14.5px;line-height:14.5px;color:#000;">300</div></div>
<div style="position:absolute;left:397px;top:291px;width:70px;height:20px;overflow:hidden;"><div style="position:absolute;right:7px;top:5.53px;white-space:nowrap;font-size:14.5px;line-height:14.5px;color:#000;">50</div></div>
<div style="position:absolute;left:467px;top:291px;width:71px;height:20px;overflow:hidden;"><div style="position:absolute;right:3px;top:2.23px;white-space:nowrap;font-size:14.5px;line-height:14.5px;color:#f00;">(250)</div></div>
<div style="position:absolute;left:538px;top:291px;width:70px;height:20px;overflow:hidden;"><div style="position:absolute;right:5px;top:5.53px;white-space:nowrap;font-size:14.5px;line-height:14.5px;color:#000;">400</div></div>
<div style="position:absolute;left:229px;top:311px;width:97px;height:20px;overflow:hidden;"><div style="position:absolute;left:calc(50% + 0px);transform:translateX(-50%);top:4.60px;white-space:nowrap;font-size:15px;line-height:15px;color:#000;">Kyoto</div></div>
<div style="position:absolute;left:326px;top:311px;width:71px;height:20px;overflow:hidden;"><div style="position:absolute;right:7px;top:5.53px;white-space:nowrap;font-size:14.5px;line-height:14.5px;color:#000;">400</div></div>
<div style="position:absolute;left:397px;top:311px;width:70px;height:20px;overflow:hidden;"><div style="position:absolute;right:7px;top:5.53px;white-space:nowrap;font-size:14.5px;line-height:14.5px;color:#000;">470</div></div>
<div style="position:absolute;left:467px;top:311px;width:71px;height:20px;overflow:hidden;"><div style="position:absolute;right:8px;top:2.23px;white-space:nowrap;font-size:14.5px;line-height:14.5px;color:#000;">70</div></div>
<div style="position:absolute;left:538px;top:311px;width:70px;height:20px;overflow:hidden;"><div style="position:absolute;right:5px;top:5.53px;white-space:nowrap;font-size:14.5px;line-height:14.5px;color:#000;">500</div></div>
<div style="position:absolute;left:229px;top:331px;width:97px;height:20px;overflow:hidden;"><div style="position:absolute;left:calc(50% + 0px);transform:translateX(-50%);top:4.60px;white-space:nowrap;font-size:15px;line-height:15px;color:#000;">Hiroshima</div></div>
<div style="position:absolute;left:326px;top:331px;width:71px;height:20px;overflow:hidden;"><div style="position:absolute;right:7px;top:5.53px;white-space:nowrap;font-size:14.5px;line-height:14.5px;color:#000;">400</div></div>
<div style="position:absolute;left:397px;top:331px;width:70px;height:20px;overflow:hidden;"><div style="position:absolute;right:7px;top:5.53px;white-space:nowrap;font-size:14.5px;line-height:14.5px;color:#000;">470</div></div>
<div style="position:absolute;left:467px;top:331px;width:71px;height:20px;overflow:hidden;"><div style="position:absolute;right:8px;top:2.23px;white-space:nowrap;font-size:14.5px;line-height:14.5px;color:#000;">70</div></div>
<div style="position:absolute;left:538px;top:331px;width:70px;height:20px;overflow:hidden;"><div style="position:absolute;right:5px;top:5.53px;white-space:nowrap;font-size:14.5px;line-height:14.5px;color:#000;">300</div></div>
<div style="position:absolute;left:229px;top:351px;width:97px;height:20px;overflow:hidden;"><div style="position:absolute;left:calc(50% + 0px);transform:translateX(-50%);top:4.60px;white-space:nowrap;font-size:15px;line-height:15px;color:#000;">Fukuoka</div></div>
<div style="position:absolute;left:326px;top:351px;width:71px;height:20px;overflow:hidden;"><div style="position:absolute;right:7px;top:5.53px;white-space:nowrap;font-size:14.5px;line-height:14.5px;color:#000;">400</div></div>
<div style="position:absolute;left:397px;top:351px;width:70px;height:20px;overflow:hidden;"><div style="position:absolute;right:7px;top:5.53px;white-space:nowrap;font-size:14.5px;line-height:14.5px;color:#000;">470</div></div>
<div style="position:absolute;left:467px;top:351px;width:71px;height:20px;overflow:hidden;"><div style="position:absolute;right:8px;top:2.23px;white-space:nowrap;font-size:14.5px;line-height:14.5px;color:#000;">70</div></div>
<div style="position:absolute;left:538px;top:351px;width:70px;height:20px;overflow:hidden;"><div style="position:absolute;right:5px;top:5.53px;white-space:nowrap;font-size:14.5px;line-height:14.5px;color:#000;">400</div></div>
<div style="position:absolute;left:326px;top:371px;width:71px;height:20px;overflow:hidden;"><div style="position:absolute;right:7px;top:3.13px;white-space:nowrap;font-size:14.5px;line-height:14.5px;color:#000;">3,990</div></div>
<div style="position:absolute;left:397px;top:371px;width:70px;height:20px;overflow:hidden;"><div style="position:absolute;right:10px;top:3.13px;white-space:nowrap;font-size:14.5px;line-height:14.5px;color:#000;">3,531</div></div>
<div style="position:absolute;left:467px;top:371px;width:71px;height:20px;overflow:hidden;"><div style="position:absolute;right:2px;top:3.13px;white-space:nowrap;font-size:14.5px;line-height:14.5px;color:#f00;">(459)</div></div>
<div style="position:absolute;left:538px;top:371px;width:70px;height:20px;overflow:hidden;"><div style="position:absolute;right:7px;top:3.13px;white-space:nowrap;font-size:14.5px;line-height:14.5px;color:#000;">4,640</div></div>
<div style="position:absolute;left:34px;top:77px;width:556px;height:1px;background:#000;"></div>
<div style="position:absolute;left:326px;top:94px;width:264px;height:1px;background:#000;"></div>
<div style="position:absolute;left:34px;top:111px;width:556px;height:1px;background:#000;"></div>
<div style="position:absolute;left:229px;top:131px;width:361px;height:1px;background:#000;"></div>
<div style="position:absolute;left:229px;top:151px;width:361px;height:1px;background:#000;"></div>
<div style="position:absolute;left:229px;top:171px;width:361px;height:1px;background:#000;"></div>
<div style="position:absolute;left:229px;top:191px;width:361px;height:1px;background:#000;"></div>
<div style="position:absolute;left:229px;top:211px;width:361px;height:1px;background:#000;"></div>
<div style="position:absolute;left:229px;top:231px;width:361px;height:1px;background:#000;"></div>
<div style="position:absolute;left:229px;top:251px;width:361px;height:1px;background:#000;"></div>
<div style="position:absolute;left:229px;top:271px;width:361px;height:1px;background:#000;"></div>
<div style="position:absolute;left:229px;top:291px;width:361px;height:1px;background:#000;"></div>
<div style="position:absolute;left:229px;top:311px;width:361px;height:1px;background:#000;"></div>
<div style="position:absolute;left:229px;top:331px;width:361px;height:1px;background:#000;"></div>
<div style="position:absolute;left:229px;top:351px;width:361px;height:1px;background:#000;"></div>
<div style="position:absolute;left:229px;top:371px;width:361px;height:1px;background:#000;"></div>
<div style="position:absolute;left:131px;top:191px;width:99px;height:1px;background:#000;"></div>
<div style="position:absolute;left:131px;top:231px;width:99px;height:1px;background:#000;"></div>
<div style="position:absolute;left:34px;top:271px;width:196px;height:1px;background:#000;"></div>
<div style="position:absolute;left:131px;top:331px;width:99px;height:1px;background:#000;"></div>
<div style="position:absolute;left:131px;top:351px;width:99px;height:1px;background:#000;"></div>
<div style="position:absolute;left:34px;top:371px;width:556px;height:1px;background:#000;"></div>
<div style="position:absolute;left:34px;top:391px;width:556px;height:1px;background:#000;"></div>
<div style="position:absolute;left:34px;top:77px;width:1px;height:315px;background:#000;"></div>
<div style="position:absolute;left:131px;top:77px;width:1px;height:315px;background:#000;"></div>
<div style="position:absolute;left:229px;top:77px;width:1px;height:315px;background:#000;"></div>
<div style="position:absolute;left:326px;top:77px;width:1px;height:315px;background:#000;"></div>
<div style="position:absolute;left:397px;top:94px;width:1px;height:298px;background:#000;"></div>
<div style="position:absolute;left:467px;top:94px;width:1px;height:298px;background:#000;"></div>
<div style="position:absolute;left:538px;top:77px;width:1px;height:315px;background:#000;"></div>
</div>
<div style="position:absolute;left:623px;top:649px;width:621px;height:1px;background:#a0a0a0;"></div>
<div style="position:absolute;left:661px;top:650px;width:584px;height:21px;background:#fff;"></div>
<div style="position:absolute;left:660px;top:650px;width:1px;height:21px;background:#c6c6c6;"></div>
<div style="position:absolute;left:663px;top:653px;width:580px;height:15px;border:1px solid #7a7a7a;background:#fff;"></div>
<div style="position:absolute;left:663px;top:653px;width:17px;height:15px;border:1px solid #7a7a7a;background:#f7f7f7;"></div>
<svg style="position:absolute;left:667px;top:656px" width="9" height="9" viewBox="0 0 9 9"><path d="M8 0.5V8.5L1 4.5Z" fill="#555"/></svg>
<div style="position:absolute;left:679px;top:653px;width:103px;height:15px;border:1px solid #7a7a7a;border-left:2px solid #7a7a7a;background:#f0f0f0;"></div>
<svg style="position:absolute;left:727px;top:657px" width="9" height="8" viewBox="0 0 9 8"><path d="M1 0V8M4.5 0V8M8 0V8" stroke="#888" stroke-width="1"/></svg>
<div style="position:absolute;left:1226px;top:653px;width:17px;height:15px;border:1px solid #7a7a7a;background:#f7f7f7;"></div>
<svg style="position:absolute;left:1230px;top:656px" width="9" height="9" viewBox="0 0 9 9"><path d="M1 0.5V8.5L8 4.5Z" fill="#555"/></svg>
<div style="position:absolute;left:1244px;top:206px;width:22px;height:444px;background:#f5f5f5;"></div>
<div style="position:absolute;left:1244px;top:206px;width:1px;height:443px;background:#c6c6c6;"></div>
<div style="position:absolute;left:1248px;top:209px;width:15px;height:436px;border:1px solid #8a8a8a;background:#f0f0f0;"></div>
<div style="position:absolute;left:1248px;top:209px;width:15px;height:17px;border:1px solid #8a8a8a;background:#f7f7f7;"></div>
<svg style="position:absolute;left:1251px;top:213px" width="9" height="9" viewBox="0 0 9 9"><path d="M0.5 8H8.5L4.5 1Z" fill="#555"/></svg>
<div style="position:absolute;left:1248px;top:628px;width:15px;height:17px;border:1px solid #8a8a8a;background:#f7f7f7;"></div>
<svg style="position:absolute;left:1251px;top:632px" width="9" height="9" viewBox="0 0 9 9"><path d="M0.5 1H8.5L4.5 8Z" fill="#555"/></svg>
<svg style="position:absolute;left:1251px;top:423px" width="9" height="9" viewBox="0 0 9 9"><path d="M1 1.5H8M1 4.5H8M1 7.5H8" stroke="#999" stroke-width="1"/></svg>
<div style="position:absolute;left:1102px;top:671px;width:1px;height:21px;background:#9a9a9a;"></div>
<div style="position:absolute;left:1115px;top:680px;width:5px;height:2px;background:#555;"></div>
<div style="position:absolute;left:1128px;top:681px;width:59px;height:1px;background:#666;"></div>
<div style="position:absolute;left:1156px;top:676px;width:3px;height:10px;background:#555;"></div>
<div style="position:absolute;left:1192px;top:672px;white-space:nowrap;font-size:15px;font-weight:bold;color:#555;line-height:16px;">+</div>
<div style="position:absolute;left:1210px;top:675px;white-space:nowrap;font-size:11px;color:#666;line-height:12px;;letter-spacing:-0.047px">100%</div>
<div style="position:absolute;left:1107px;top:710px;width:76px;height:28px;background:#7b7b7b;border-radius:4px;"></div>
<div style="position:absolute;left:1126px;top:717px;white-space:nowrap;font-size:14px;color:#fff;line-height:16px;;letter-spacing:0.284px">return</div>
<div style="position:absolute;left:1192px;top:711px;width:76px;height:28px;background:#0098d8;border-radius:4px;"></div>
<div style="position:absolute;left:1215.5px;top:718px;white-space:nowrap;font-size:14px;color:#fff;line-height:16px;;letter-spacing:0.068px">Next</div>
</body></html>
